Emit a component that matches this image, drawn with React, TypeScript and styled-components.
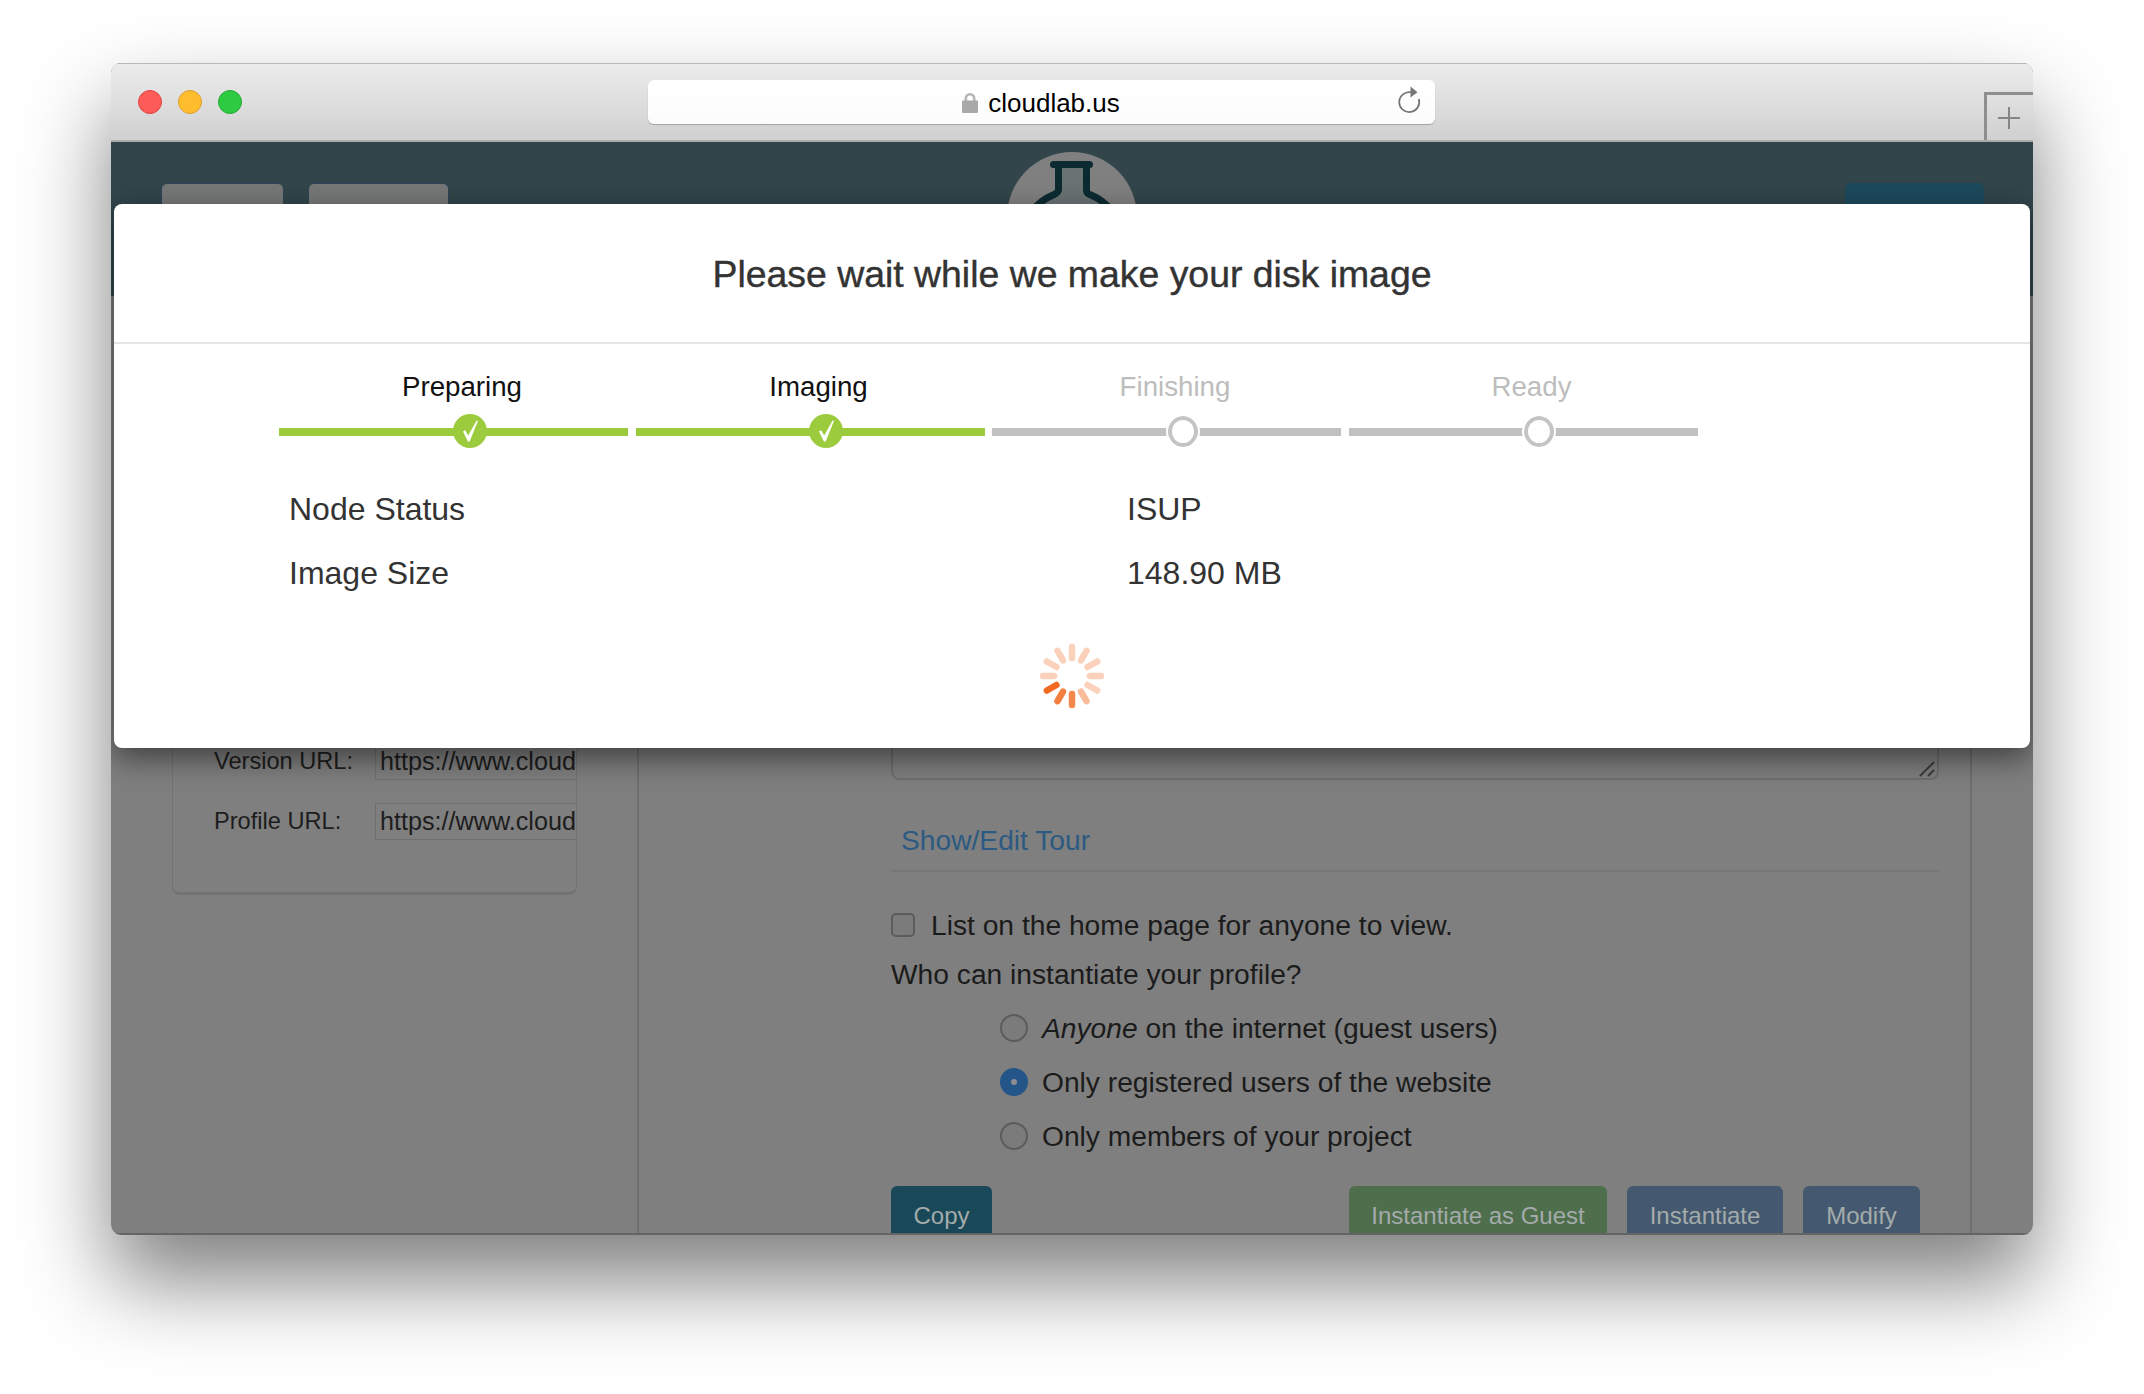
import React from "react";
import styled, { createGlobalStyle } from "styled-components";

const Global = createGlobalStyle`
  html, body { margin: 0; background: #fff; }
  body { width: 2144px; height: 1394px; overflow: hidden; font-family: "Liberation Sans", Arial, sans-serif; }
`;

const Stage = styled.div`
  width: 2144px;
  height: 1394px;
  padding: 63px 111px 0 111px;
  box-sizing: border-box;
  background: #fff;
`;

const WindowShadow = styled.div`
  width: 1922px;
  border-radius: 10px;
  box-shadow: 0 46px 86px rgba(0, 0, 0, 0.5);
`;

const Window = styled.div`
  position: relative;
  height: 1172px;
  display: flex;
  flex-direction: column;
  border-radius: 10px;
  overflow: hidden;
  background: #7f7f7f;
`;

const TitleBar = styled.div`
  height: 79px;
  flex: none;
  box-sizing: border-box;
  display: flex;
  padding-left: 27px;
  border-top: 1px solid #b9b9b9;
  border-bottom: 2px solid #ababab;
  background: linear-gradient(#ececec, #d0d0d0);
`;

const Lights = styled.div`
  width: 510px;
  height: 60px;
  flex: none;
  display: flex;
  align-items: center;
  gap: 16px;
  margin-top: 8px;
`;

const Light = styled.span<{ $fill: string; $edge: string }>`
  width: 24px;
  height: 24px;
  border-radius: 50%;
  box-sizing: border-box;
  background: ${(p) => p.$fill};
  border: 1px solid ${(p) => p.$edge};
`;

const UrlBar = styled.div`
  width: 787px;
  height: 44px;
  margin-top: 16px;
  flex: none;
  box-sizing: border-box;
  display: flex;
  align-items: center;
  justify-content: center;
  gap: 10px;
  position: relative;
  padding-right: 1px;
  border-radius: 6px;
  background: linear-gradient(#fff, #fcfcfc);
  box-shadow: 0 1px 1px rgba(0, 0, 0, 0.25);
  font-size: 26px;
  color: #000;
`;

const UrlText = styled.span`
  padding-top: 2px;
`;

const Reload = styled.svg`
  position: absolute;
  right: 13px;
  top: 5px;
`;

const NewTab = styled.div`
  width: 49px;
  height: 48px;
  margin-left: auto;
  align-self: flex-end;
  box-sizing: border-box;
  display: flex;
  align-items: center;
  justify-content: center;
  padding-right: 2px;
  border-left: 3px solid #8e8e8e;
  border-top: 3px solid #8e8e8e;
`;

const Header = styled.div`
  height: 154px;
  flex: none;
  box-sizing: border-box;
  display: flex;
  align-items: flex-start;
  gap: 24px;
  padding: 41px 49px 0 50px;
  position: relative;
  background: #31454a;
`;

const HeaderButton = styled.div<{ $w: number }>`
  width: ${(p) => p.$w}px;
  height: 60px;
  box-sizing: border-box;
  border: 1px solid #2d4658;
  border-radius: 6px;
  background: #767878;
`;

const HeaderText = styled.div`
  margin: 12px 0 0 10px;
  font-size: 28px;
  line-height: 40px;
  color: #111;
`;

const HeaderAction = styled.div`
  width: 139px;
  height: 60px;
  margin-left: auto;
  border-radius: 6px;
  background: #1c4a5c;
`;

const Logo = styled.div`
  position: absolute;
  left: 896px;
  top: 10px;
  width: 130px;
  height: 130px;
  border-radius: 50%;
  background: #808080;
`;

const Main = styled.div`
  flex: 1;
  min-height: 0;
  display: flex;
  overflow: hidden;
  border-bottom: 2px solid #646464;
  box-sizing: border-box;
`;

const LeftCol = styled.div`
  width: 528px;
  flex: none;
  box-sizing: border-box;
  padding: 24px 0 0 61px;
  border-right: 2px solid #6f6f6f;
`;

const InfoCard = styled.div`
  width: 405px;
  height: 575px;
  box-sizing: border-box;
  display: flex;
  flex-direction: column;
  justify-content: flex-end;
  gap: 23px;
  padding: 0 0 52px 41px;
  border: 1px solid #727272;
  border-bottom-width: 3px;
  border-radius: 8px;
`;

const UrlRow = styled.div`
  display: flex;
  align-items: center;
  font-size: 23.6px;
  color: #1d1d1d;
`;

const UrlLabel = styled.span`
  width: 161px;
  flex: none;
`;

const UrlInput = styled.input`
  flex: 1;
  min-width: 0;
  height: 37px;
  box-sizing: border-box;
  padding: 0 0 0 4px;
  border: 1px solid #707070;
  border-right: 0;
  background: transparent;
  font-family: inherit;
  font-size: 25.2px;
  color: #1d1d1d;
  outline: 0;
`;

const RightCol = styled.div`
  width: 1333px;
  flex: none;
  box-sizing: border-box;
  padding: 24px 31px 0 252px;
  border-right: 2px solid #6f6f6f;
  font-size: 28.2px;
  color: #1b1b1b;
`;

const NotesWrap = styled.div`
  position: relative;
`;

const Notes = styled.textarea`
  display: block;
  width: 100%;
  height: 460px;
  box-sizing: border-box;
  border: 2px solid #6e6e6e;
  border-radius: 8px;
  background: transparent;
  outline: 0;
  resize: none;
`;

const Grip = styled.svg`
  position: absolute;
  right: 4px;
  bottom: 3px;
`;

const TourRow = styled.div`
  height: 92px;
  box-sizing: border-box;
  display: flex;
  align-items: flex-end;
  padding: 0 0 10px 10px;
  border-bottom: 2px solid #777;
  line-height: 40px;
  color: #2c5a82;
`;

const CheckRow = styled.label`
  display: flex;
  align-items: center;
  height: 40px;
  gap: 16px;
  margin-top: 33px;
`;

const CheckBox = styled.span`
  width: 24px;
  height: 24px;
  box-sizing: border-box;
  border: 2px solid #5c5c5c;
  border-radius: 5px;
  background: #7b7b7b;
`;

const Question = styled.div`
  height: 40px;
  margin-top: 9px;
  line-height: 40px;
`;

const RadioList = styled.div`
  display: flex;
  flex-direction: column;
  gap: 14px;
  margin: 14px 0 0 109px;
`;

const RadioRow = styled.label`
  display: flex;
  align-items: center;
  height: 40px;
  gap: 14px;
`;

const Radio = styled.span<{ $on?: boolean }>`
  width: 28px;
  height: 28px;
  box-sizing: border-box;
  border-radius: 50%;
  background: ${(p) => (p.$on ? "#235588" : "#7b7b7b")};
  border: ${(p) => (p.$on ? "0" : "2px solid #5c5c5c")};
  display: flex;
  align-items: center;
  justify-content: center;
  &::after {
    content: "";
    display: ${(p) => (p.$on ? "block" : "none")};
    width: 6px;
    height: 6px;
    border-radius: 50%;
    background: #8f8f8f;
  }
`;

const ActionRow = styled.div`
  display: flex;
  gap: 20px;
  margin-top: 30px;
  padding-right: 19px;
`;

const ActionButton = styled.div<{ $w: number; $fill: string; $push?: boolean }>`
  width: ${(p) => p.$w}px;
  height: 60px;
  flex: none;
  box-sizing: border-box;
  display: flex;
  align-items: center;
  justify-content: center;
  border-radius: 6px;
  background: ${(p) => p.$fill};
  margin-left: ${(p) => (p.$push ? "auto" : "0")};
  font-size: 24px;
  color: #a3abab;
`;

const Modal = styled.div`
  position: absolute;
  left: 3px;
  top: 141px;
  width: 1916px;
  height: 544px;
  box-sizing: border-box;
  border-radius: 8px;
  background: #fff;
  box-shadow: 0 10px 30px rgba(0, 0, 0, 0.5);
  color: #333;
`;

const ModalHeader = styled.div`
  height: 140px;
  box-sizing: border-box;
  display: flex;
  align-items: center;
  justify-content: center;
  padding-top: 2px;
  border-bottom: 2px solid #e5e5e5;
  font-size: 37.4px;
  font-weight: 500;
  -webkit-text-stroke: 0.4px #333;
`;

const Steps = styled.div`
  display: flex;
  gap: 7.5px;
  padding: 23px 0 0 165px;
`;

const Step = styled.div`
  width: 349px;
  flex: none;
`;

const StepLabel = styled.div<{ $done: boolean }>`
  height: 40px;
  line-height: 40px;
  padding-left: 17px;
  text-align: center;
  font-size: 27.7px;
  color: ${(p) => (p.$done ? "#111" : "#bdbdbd")};
`;

const StepBar = styled.div<{ $done: boolean }>`
  position: relative;
  height: 8px;
  margin-top: 21px;
  background: ${(p) => (p.$done ? "#9ccc3d" : "#c1c1c1")};
`;

const DoneDot = styled.div`
  position: absolute;
  left: calc(50% - 1px);
  top: -14px;
  width: 34px;
  height: 34px;
  border-radius: 50%;
  background: #9ccc3d;
`;

const OpenDot = styled.div`
  position: absolute;
  left: calc(50% + 1px);
  top: -12px;
  width: 30px;
  height: 31px;
  box-sizing: border-box;
  border-radius: 50%;
  background: #fff;
  border: 4px solid #c4c4c4;
  outline: 2px solid #fff;
`;

const Stats = styled.div`
  display: grid;
  grid-template-columns: 838px 1fr;
  row-gap: 24px;
  padding: 53px 0 0 175px;
  font-size: 32px;
  line-height: 40px;
`;

const SpinnerWrap = styled.div`
  display: flex;
  justify-content: center;
  margin-top: 47px;
`;

function Spinner() {
  const shades: Record<number, number> = { 240: 1, 210: 0.85, 180: 0.8, 150: 0.45 };
  const spokes = Array.from({ length: 12 }, (_, i) => i * 30);
  return (
    <svg width="72" height="72" viewBox="-36 -36 72 72">
      {spokes.map((a) => (
        <line
          key={a}
          x1="0"
          y1="-18"
          x2="0"
          y2="-29"
          stroke="#f26a21"
          strokeWidth="6.5"
          strokeLinecap="round"
          opacity={shades[a] ?? 0.3}
          transform={`rotate(${a})`}
        />
      ))}
    </svg>
  );
}

function Check() {
  return (
    <svg width="34" height="34" viewBox="0 0 34 34">
      <path d="M10 17.5l2.2-1.2 3 5.2L23.6 6.5l1.3.6-8.2 20.4h-1.8z" fill="#fff" />
    </svg>
  );
}

const steps = [
  { name: "Preparing", done: true },
  { name: "Imaging", done: true },
  { name: "Finishing", done: false },
  { name: "Ready", done: false },
];

export default function App() {
  return (
    <>
      <Global />
      <Stage>
        <WindowShadow>
          <Window>
            <TitleBar>
              <Lights>
                <Light $fill="#fc5b57" $edge="#e2443f" />
                <Light $fill="#ffbd2e" $edge="#dea032" />
                <Light $fill="#2ccb41" $edge="#26a934" />
              </Lights>
              <UrlBar>
                <svg width="16" height="21" viewBox="0 0 16 21">
                  <path d="M2.5 9V6.5a5.5 5.5 0 0 1 11 0V9h-2.6V6.5a2.9 2.9 0 0 0-5.8 0V9z" fill="#b5b5b5" />
                  <rect y="8.5" width="16" height="12.5" rx="1" fill="#a8a8a8" />
                </svg>
                <UrlText>cloudlab.us</UrlText>
                <Reload width="26" height="30" viewBox="0 0 26 30">
                  <path d="M15 7.2A10 10 0 1 0 22.8 14" fill="none" stroke="#777" strokeWidth="1.8" />
                  <path d="M14.5 1.5l7 5.7-7 5.3z" fill="#777" />
                </Reload>
              </UrlBar>
              <NewTab>
                <svg width="22" height="22" viewBox="0 0 22 22">
                  <path d="M0 11h22M11 0v22" stroke="#858585" strokeWidth="2" />
                </svg>
              </NewTab>
            </TitleBar>

            <Header>
              <HeaderButton $w={123} />
              <HeaderButton $w={141} />
              <HeaderText>Actions</HeaderText>
              <HeaderAction />
              <Logo>
                <svg width="130" height="130" viewBox="0 0 130 130">
                  <path d="M51.5 12.5V38Q51 41 46 43Q34 48 26 58H104Q96 48 84 43Q79 41 79.5 38V12.5z" fill="#6a7273" />
                  <path
                    d="M46.5 12.5H82.5M51.5 12.5V38Q51 41 46 43Q34 48 26 58M79.5 12.5V38Q79 41 84 43Q96 48 104 58"
                    fill="none"
                    stroke="#0c2b31"
                    strokeWidth="7"
                    strokeLinecap="round"
                    strokeLinejoin="round"
                  />
                </svg>
              </Logo>
            </Header>

            <Main>
              <LeftCol>
                <InfoCard>
                  <UrlRow>
                    <UrlLabel>Version URL:</UrlLabel>
                    <UrlInput readOnly value="https://www.cloudlab.us/p/version" />
                  </UrlRow>
                  <UrlRow>
                    <UrlLabel>Profile URL:</UrlLabel>
                    <UrlInput readOnly value="https://www.cloudlab.us/p/profile" />
                  </UrlRow>
                </InfoCard>
              </LeftCol>
              <RightCol>
                <NotesWrap>
                  <Notes readOnly />
                  <Grip width="16" height="16" viewBox="0 0 16 16">
                    <path d="M1.5 14.5L14.5 1.5M9.5 14.5L14.5 9.5" stroke="#3c3c3c" strokeWidth="2" strokeLinecap="round" />
                  </Grip>
                </NotesWrap>
                <TourRow>Show/Edit Tour</TourRow>
                <CheckRow>
                  <CheckBox />
                  List on the home page for anyone to view.
                </CheckRow>
                <Question>Who can instantiate your profile?</Question>
                <RadioList>
                  <RadioRow>
                    <Radio />
                    <span>
                      <em>Anyone</em> on the internet (guest users)
                    </span>
                  </RadioRow>
                  <RadioRow>
                    <Radio $on />
                    <span>Only registered users of the website</span>
                  </RadioRow>
                  <RadioRow>
                    <Radio />
                    <span>Only members of your project</span>
                  </RadioRow>
                </RadioList>
                <ActionRow>
                  <ActionButton $w={101} $fill="#194858">Copy</ActionButton>
                  <ActionButton $w={258} $fill="#4f6e4c" $push>Instantiate as Guest</ActionButton>
                  <ActionButton $w={156} $fill="#44596f">Instantiate</ActionButton>
                  <ActionButton $w={117} $fill="#44596f">Modify</ActionButton>
                </ActionRow>
              </RightCol>
            </Main>

            <Modal>
              <ModalHeader>Please wait while we make your disk image</ModalHeader>
              <Steps>
                {steps.map((s) => (
                  <Step key={s.name}>
                    <StepLabel $done={s.done}>{s.name}</StepLabel>
                    <StepBar $done={s.done}>
                      {s.done ? (
                        <DoneDot>
                          <Check />
                        </DoneDot>
                      ) : (
                        <OpenDot />
                      )}
                    </StepBar>
                  </Step>
                ))}
              </Steps>
              <Stats>
                <span>Node Status</span>
                <span>ISUP</span>
                <span>Image Size</span>
                <span>148.90 MB</span>
              </Stats>
              <SpinnerWrap>
                <Spinner />
              </SpinnerWrap>
            </Modal>
          </Window>
        </WindowShadow>
      </Stage>
    </>
  );
}
